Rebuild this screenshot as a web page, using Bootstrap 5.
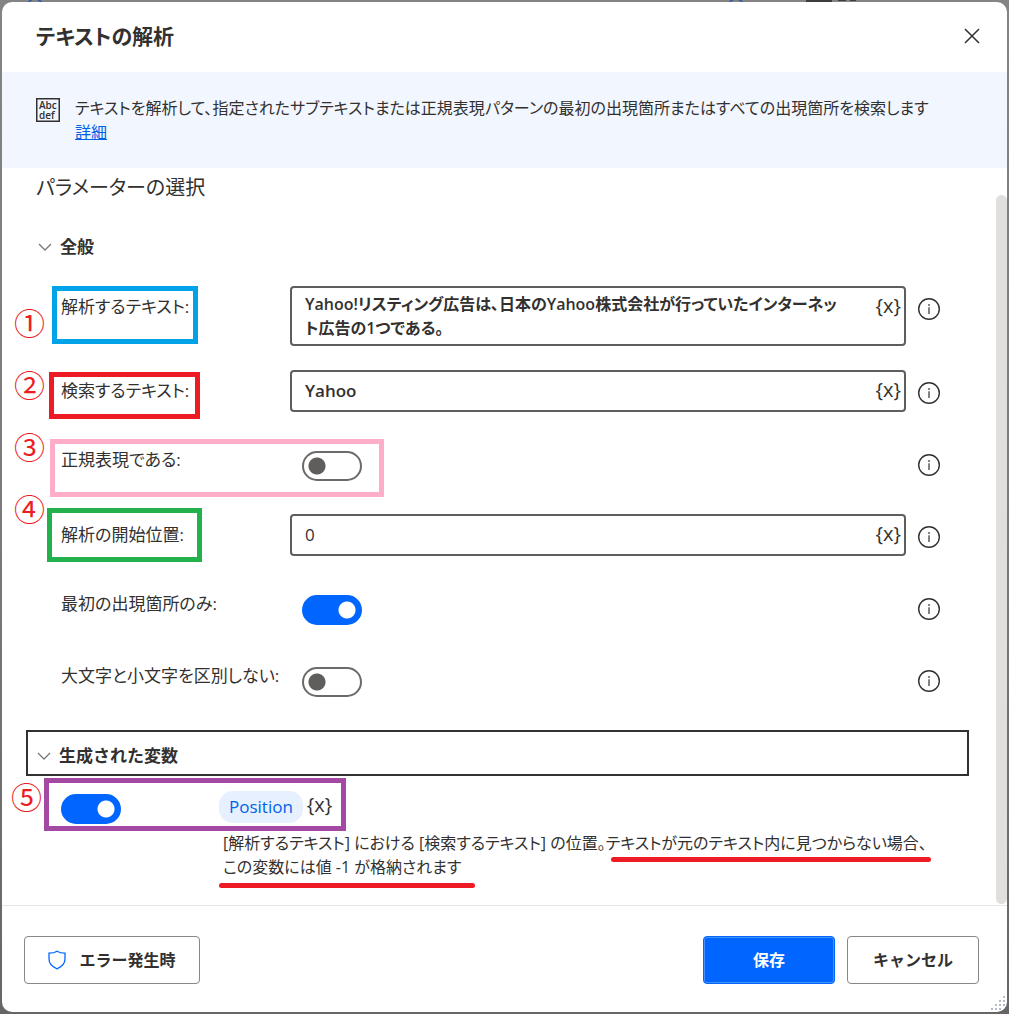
<!DOCTYPE html>
<html lang="ja">
<head>
<meta charset="utf-8">
<meta name="viewport" content="width=device-width, initial-scale=1">
<title>テキストの解析</title>
<link href="https://cdn.jsdelivr.net/npm/bootstrap@5.3.0/dist/css/bootstrap.min.css" rel="stylesheet">
<style>
  body {
    background: linear-gradient(#848484, #7b7b7b 50%, #666);
    color: #323130;
    font-family: "Open Sans", "Noto Sans CJK JP", sans-serif;
    font-size: 16px;
    line-height: 24px;
    font-feature-settings: "palt";
  }
  .backdrop-scrap { top: 0; left: 0; }
  .dialog-shell { min-height: 100vh; padding: 2px; }
  .dialog-box { background: #fff; border-radius: 10px; overflow: hidden; }
  .dialog-head { height: 70px; padding: 0 24px 2px 34px; }
  .dialog-title { font-size: 21px; line-height: 32px; font-weight: 600; }
  .plain-btn { background: none; border: 0; padding: 0; color: inherit; line-height: 0; }
  .intro-band { background: #f1f6ff; min-height: 96px; padding: 24px 34px; gap: 15px; }
  .intro-band svg { margin-top: 2px; }
  .intro-band a { color: #0062e6; }
  .dialog-main { padding: 4px 38px 16px 24px; }
  .main-title { font-size: 20px; line-height: 32px; font-weight: 400; padding-left: 10px; }
  .group-toggle { background: none; border: 0; padding: 0; font-size: 17px; font-weight: 600; color: inherit; gap: 8px; line-height: 24px; }
  .group-general { margin: 31px 0 0 12px; }
  .param-list { padding: 27px 29px 0 35px; }
  .param-row { min-height: 42px; margin-bottom: 30px; }
  .param-row.tall-row { margin-bottom: 24px; }
  .param-label { width: 229px; padding-top: 9px; font-size: 17px; }
  .param-label.flag-label { padding-top: 6px; }
  .param-field { border: 2px solid #605e5c; border-radius: 4px; padding: 7px 48px 7px 13px; color: #323130; resize: none; overflow: hidden; line-height: 24px; font-size: 17px; font-feature-settings: inherit; }
  .param-field:focus { box-shadow: none; border-color: #0066ff; }
  .strong-field { font-weight: 600; }
  textarea.param-field { height: 60px; font-size: 16px; padding: 4px 56px 4px 13px; }
  .var-btn { font-size: 20px; line-height: 24px; background: none; border: 0; padding: 0; color: #323130; }
  .field-var { right: 5px; top: 8px; }
  .info-btn { margin: 12px 0 0 12px; height: 22px; }
  .form-check-input.big-switch {
    width: 60px; height: 30px; margin: 9px 0 0 12px; border: 2px solid #6c6a68; border-radius: 15px;
    background: #fff radial-gradient(circle at 13px 13px, #605e5c 8px, transparent 9px) no-repeat;
  }
  .form-check-input.big-switch:checked {
    border-color: #0066ff;
    background: #0066ff radial-gradient(circle at 43px 13px, #fff 8px, transparent 9px) no-repeat;
  }
  .group-output { border: 2px solid #323130; height: 46px; padding: 6px 9px 0; }
  .output-row { padding: 15px 0 0 35px; }
  .form-check-input.output-switch { margin: 3px 98px 0 0; }
  .var-pill { background: #e6f0ff; color: #0062e6; border-radius: 14px; height: 32px; line-height: 32px; font-size: 17px; padding: 0 10px; margin-right: 4px; }
  .pill-var { line-height: 28px; }
  .output-note { padding: 7px 0 0 197px; }
  .dialog-foot { border-top: 1px solid #e6e6e6; min-height: 107px; padding: 2px 28px 0 22px; gap: 12px; }
  .foot-btn { height: 48px; min-width: 132px; border: 1px solid #8a8886; border-radius: 4px; background: #fff; color: #323130; font-weight: 600; font-size: 16px; }
  .foot-btn.save-btn { background: #0066ff; border-color: #0066ff; color: #fff; box-shadow: inset 0 0 0 1px #4791ff; }
  .error-btn { width: 176px; gap: 13px; }
  .scroll-thumb { top: 193px; right: 0; bottom: 108px; width: 11px; border-radius: 6px; background: #e1dfdd; }
  .grip { right: 0; bottom: 0; }
  /* review marks laid over the form */
  .frame-mark { position: absolute; border: 5px solid; pointer-events: none; }
  .num-mark { position: absolute; color: #ed1c24; font-family: "Noto Sans CJK JP", sans-serif; font-size: 31px; line-height: 32px; pointer-events: none; }
  .line-mark { position: absolute; height: 5px; border-radius: 3px; background: #ed1c24; }
  .mark-1 { left: -9px; top: 0; width: 146px; height: 58px; border-color: #00a2e8; }
  .mark-2 { left: -12px; top: 2px; width: 151px; height: 47px; border-color: #ed1c24; }
  .mark-3 { left: -11px; top: -3px; width: 334px; height: 58px; border-color: #ffaec9; }
  .mark-4 { left: -14px; top: -6px; width: 155px; height: 54px; border-color: #22b14c; }
  .mark-5 { left: 18px; top: 2px; width: 302px; height: 53px; border-color: #a349a4; }
  .num-1 { left: -47px; top: 20px; }
  .num-2 { left: -47px; top: -2px; }
  .num-3 { left: -47px; top: -12px; }
  .num-4 { left: -47px; top: -22px; }
  .num-5 { left: -15px; top: 4px; }
  .line-1 { left: 585px; top: 33px; width: 320px; }
  .line-2 { left: 193px; top: 59px; width: 256px; }
</style>
<script src="https://cdn.jsdelivr.net/npm/bootstrap@5.3.0/dist/js/bootstrap.bundle.min.js"></script>
</head>
<body>
<svg class="backdrop-scrap position-absolute" width="1009" height="8" aria-hidden="true">
  <g fill="none" stroke="#2458b0" stroke-width="1.5"><circle cx="35" cy="7" r="8"/><circle cx="736" cy="7" r="8"/></g>
  <path fill="#3c3c3c" d="M806 0h26v3h-26zM838 0h8v1h-8zM850 0h6v1h-6z"/>
</svg>
<svg class="d-none" aria-hidden="true">
  <symbol id="info" viewBox="0 0 22 22"><circle cx="11" cy="11" r="10.3" fill="none" stroke="#323130" stroke-width="1.4"/><path fill="#323130" d="M10.4 9.200h1.200v6.800h-1.200zM10.200 6.200h1.600v1.500h-1.600z"/></symbol>
  <symbol id="chev" viewBox="0 0 14 8"><path d="M1 1l6 6 6-6" fill="none" stroke="#7a7876" stroke-width="1.3"/></symbol>
</svg>
<div class="dialog-shell d-flex position-relative">
<div class="dialog-box d-flex flex-column flex-grow-1 position-relative" role="dialog" aria-labelledby="dlgTitle">
  <header class="dialog-head d-flex align-items-center justify-content-between">
    <h1 class="dialog-title m-0" id="dlgTitle">テキストの解析</h1>
    <button class="plain-btn" type="button" aria-label="閉じる"><svg width="22" height="22" viewBox="0 0 22 22"><path d="M4 4l14 14M18 4L4 18" fill="none" stroke="#323130" stroke-width="1.5"/></svg></button>
  </header>
  <div class="intro-band d-flex align-items-start">
    <svg class="flex-shrink-0" width="24" height="24" viewBox="0 0 24 24" font-family="Open Sans, sans-serif" font-size="10" font-weight="600" fill="#323130"><path d="M.75 .75h22.5v22.5H.75z" fill="none" stroke="#323130" stroke-width="1.5"/><text x="3" y="11">Abc</text><text x="3" y="21">def</text></svg>
    <div>テキストを解析して、指定されたサブテキストまたは正規表現パターンの最初の出現箇所またはすべての出現箇所を検索します<br><a href="#">詳細</a></div>
  </div>
  <main class="dialog-main flex-grow-1">
    <h2 class="main-title m-0">パラメーターの選択</h2>
    <button class="group-toggle group-general d-flex align-items-center" type="button"><svg width="14" height="8"><use href="#chev"/></svg>全般</button>
    <div class="param-list">
      <div class="param-row tall-row d-flex align-items-start position-relative">
        <label class="param-label flex-shrink-0" for="srcText">解析するテキスト:</label>
        <div class="position-relative flex-grow-1 d-flex">
          <textarea class="form-control param-field strong-field" id="srcText" rows="2">Yahoo!リスティング広告は、日本のYahoo株式会社が行っていたインターネット広告の1つである。</textarea>
          <button class="var-btn field-var position-absolute" type="button">{x}</button>
        </div>
        <button class="plain-btn info-btn" type="button" aria-label="情報"><svg width="22" height="22"><use href="#info"/></svg></button>
        <span class="frame-mark mark-1"></span><span class="num-mark num-1">①</span>
      </div>
      <div class="param-row d-flex align-items-start position-relative">
        <label class="param-label flex-shrink-0" for="findText">検索するテキスト:</label>
        <div class="position-relative flex-grow-1">
          <input class="form-control param-field strong-field" id="findText" type="text" value="Yahoo">
          <button class="var-btn field-var position-absolute" type="button">{x}</button>
        </div>
        <button class="plain-btn info-btn" type="button" aria-label="情報"><svg width="22" height="22"><use href="#info"/></svg></button>
        <span class="frame-mark mark-2"></span><span class="num-mark num-2">②</span>
      </div>
      <div class="param-row d-flex align-items-start position-relative">
        <label class="param-label flag-label flex-shrink-0" for="isRegex">正規表現である:</label>
        <div class="flex-grow-1 d-flex"><input class="form-check-input big-switch" id="isRegex" type="checkbox" role="switch"></div>
        <button class="plain-btn info-btn" type="button" aria-label="情報"><svg width="22" height="22"><use href="#info"/></svg></button>
        <span class="frame-mark mark-3"></span><span class="num-mark num-3">③</span>
      </div>
      <div class="param-row d-flex align-items-start position-relative">
        <label class="param-label flex-shrink-0" for="startPos">解析の開始位置:</label>
        <div class="position-relative flex-grow-1">
          <input class="form-control param-field" id="startPos" type="text" value="0">
          <button class="var-btn field-var position-absolute" type="button">{x}</button>
        </div>
        <button class="plain-btn info-btn" type="button" aria-label="情報"><svg width="22" height="22"><use href="#info"/></svg></button>
        <span class="frame-mark mark-4"></span><span class="num-mark num-4">④</span>
      </div>
      <div class="param-row d-flex align-items-start">
        <label class="param-label flag-label flex-shrink-0" for="firstOnly">最初の出現箇所のみ:</label>
        <div class="flex-grow-1 d-flex"><input class="form-check-input big-switch" id="firstOnly" type="checkbox" role="switch" checked></div>
        <button class="plain-btn info-btn" type="button" aria-label="情報"><svg width="22" height="22"><use href="#info"/></svg></button>
      </div>
      <div class="param-row d-flex align-items-start">
        <label class="param-label flag-label flex-shrink-0" for="ignoreCase">大文字と小文字を区別しない:</label>
        <div class="flex-grow-1 d-flex"><input class="form-check-input big-switch" id="ignoreCase" type="checkbox" role="switch"></div>
        <button class="plain-btn info-btn" type="button" aria-label="情報"><svg width="22" height="22"><use href="#info"/></svg></button>
      </div>
    </div>
    <button class="group-toggle group-output w-100 d-flex align-items-center" type="button"><svg width="14" height="8"><use href="#chev"/></svg>生成された変数</button>
    <div class="output-row d-flex align-items-start position-relative">
      <input class="form-check-input big-switch output-switch" id="outVar" type="checkbox" role="switch" aria-label="Position" checked>
      <label class="var-pill" for="outVar">Position</label>
      <button class="var-btn pill-var" type="button">{x}</button>
      <span class="frame-mark mark-5"></span><span class="num-mark num-5">⑤</span>
    </div>
    <div class="output-note position-relative">[解析するテキスト] における [検索するテキスト] の位置。テキストが元のテキスト内に見つからない場合、<br>この変数には値 -1 が格納されます<span class="line-mark line-1"></span><span class="line-mark line-2"></span></div>
  </main>
  <footer class="dialog-foot d-flex align-items-center">
    <button class="foot-btn error-btn me-auto d-flex align-items-center justify-content-center" type="button"><svg width="18" height="20" viewBox="0 0 18 20"><path d="M9 1.200C7 2.600 4 3.200 1 3.200V9c0 4.500 3.200 7.800 8 9.800 4.800-2 8-5.300 8-9.800V3.200c-3 0-6-.6-8-2z" fill="none" stroke="#0066ff" stroke-width="1.3"/></svg>エラー発生時</button>
    <button class="foot-btn save-btn" type="button">保存</button>
    <button class="foot-btn" type="button">キャンセル</button>
  </footer>
  <div class="scroll-thumb position-absolute"></div>
  <svg class="grip position-absolute" width="17" height="17" aria-hidden="true"><path fill="#b4bccb" d="M13 1h2v2h-2zM9 5h2v2H9zM13 5h2v2h-2zM5 9h2v2H5zM9 9h2v2H9zM13 9h2v2h-2zM1 13h2v2H1zM5 13h2v2H5zM9 13h2v2H9z"/></svg>
</div>
</div>
</body>
</html>
